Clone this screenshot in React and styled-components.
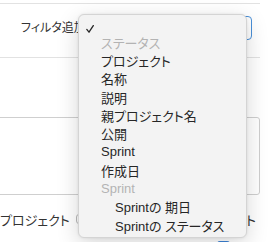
import React from "react";
import styled, { createGlobalStyle } from "styled-components";

const Global = createGlobalStyle`
  html, body { margin: 0; padding: 0; background: #fff; overflow: hidden; }
  body { font-family: "Liberation Sans", "Noto Sans CJK JP", sans-serif; color: #333; }
`;

const Frame = styled.div`
  position: relative;
  width: 272px;
  height: 242px;
  overflow: hidden;
  padding-top: 3px;
  box-sizing: border-box;
  background: #fff;
`;

const FilterSection = styled.div`
  box-sizing: border-box;
  width: 260px;
  height: 55px;
  border-top: 1px solid #e2e2e2;
  border-bottom: 1px solid #e2e2e2;
  display: flex;
  align-items: flex-start;
  padding: 12px 8px 0 21px;
`;

const Label = styled.span`
  font-size: 12px;
  line-height: 24px;
  color: #333;
  font-feature-settings: "palt";
`;

const SelectBox = styled.div`
  box-sizing: border-box;
  margin-left: auto;
  width: 165px;
  height: 24px;
  border: 1px solid #4a90d9;
  border-radius: 4px;
  background: #fff;
`;

const TextBox = styled.div`
  box-sizing: border-box;
  margin: 59px 0 0 -11px;
  width: 271px;
  height: 78px;
  border: 1px solid #cfcfcf;
  border-radius: 3px;
`;

const BottomRow = styled.div`
  display: flex;
  align-items: center;
  height: 20px;
  margin-top: 14px;
  padding-right: 16px;
  font-size: 13px;
  color: #333;
  font-feature-settings: "palt";
`;

const HelpIcon = styled.span`
  display: inline-block;
  box-sizing: border-box;
  width: 10px;
  height: 10px;
  margin-left: 6px;
  border: 1px solid #bbb;
  border-radius: 3px;
`;

const RightText = styled.span`
  margin-left: auto;
`;

const CheckRow = styled.div`
  margin-top: 12px;
  padding-left: 217px;
`;

const CheckBox = styled.div`
  width: 13px;
  height: 13px;
  border-radius: 3px;
  background: #3b82d6;
`;

const Menu = styled.div`
  position: absolute;
  left: 78px;
  top: 14px;
  width: 169px;
  height: 224px;
  box-sizing: border-box;
  padding: 4px 0 3px 7px;
  background: #f3f3f3;
  border: 1px solid #d4d4d4;
  border-radius: 6px;
  box-shadow: 0 6px 22px rgba(0, 0, 0, 0.16), 0 0 3px rgba(0, 0, 0, 0.08);
  font-size: 13px;
  font-feature-settings: "palt";
`;

const Row = styled.div`
  display: flex;
  align-items: center;
  height: ${(p) => (p.$first ? "14px" : "18.3px")};
  color: ${(p) => (p.$group ? "#b3b3b3" : "#262626")};
  padding-left: ${(p) => (p.$indent ? "29px" : "15px")};
  white-space: nowrap;
  position: relative;
`;

const CheckIcon = styled.svg`
  position: absolute;
  left: 0;
  top: 6px;
  width: 8px;
  height: 8px;
`;

const items = [
  { t: "ステータス", group: true },
  { t: "プロジェクト" },
  { t: "名称" },
  { t: "説明" },
  { t: "親プロジェクト名" },
  { t: "公開" },
  { t: "Sprint" },
  { t: "作成日" },
  { t: "Sprint", group: true },
  { t: "Sprintの 期日", indent: true },
  { t: "Sprintの ステータス", indent: true },
];

export default function App() {
  return (
    <>
      <Global />
      <Frame>
        <FilterSection>
          <Label>フィルタ追加</Label>
          <SelectBox />
        </FilterSection>
        <TextBox />
        <BottomRow>
          <span>プロジェクト</span>
          <HelpIcon />
          <RightText>ト</RightText>
        </BottomRow>
        <CheckRow>
          <CheckBox />
        </CheckRow>
        <Menu>
          <Row $first>
            <CheckIcon viewBox="0 0 8 8" fill="none">
              <path d="M0.8 4.4 L3 7.2 L7.3 0.6" stroke="#262626" strokeWidth="1.3" strokeLinecap="round" strokeLinejoin="round" />
            </CheckIcon>
          </Row>
          {items.map((it, i) => (
            <Row key={i} $group={it.group} $indent={it.indent}>
              {it.t}
            </Row>
          ))}
        </Menu>
      </Frame>
    </>
  );
}
